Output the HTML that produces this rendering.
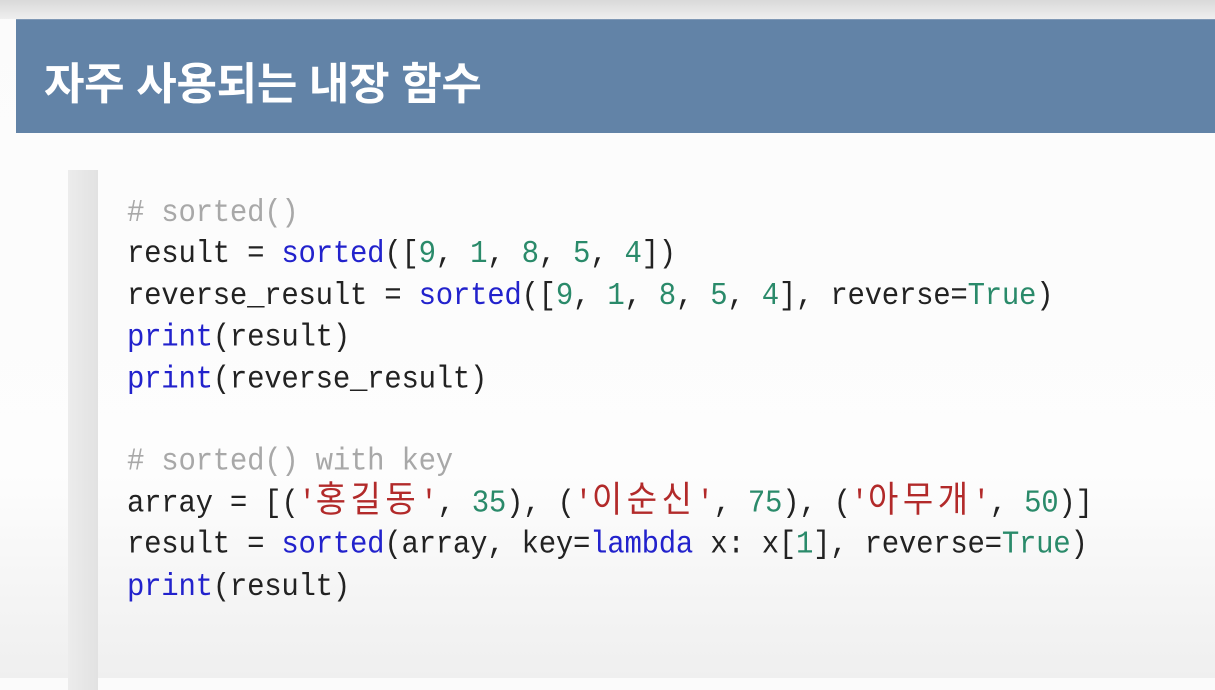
<!DOCTYPE html>
<html><head><meta charset="utf-8"><style>
html,body{margin:0;padding:0}
body{width:1215px;height:678px;overflow:hidden;position:relative;
background:linear-gradient(#fbfbfb 0%,#fdfdfd 70%,#efefef 100%);}
.top{position:absolute;left:0;top:0;width:1215px;height:19px;background:linear-gradient(#d9d9d9,#efefef);}
.hdr{position:absolute;left:16px;top:19px;width:1199px;height:113px;background:#6283a7;border-top:1px solid #7f98b5;}
.hdr span{position:absolute;left:28px;top:28px;color:#fff;font:bold 44px "Liberation Sans","Noto Sans CJK KR",sans-serif;letter-spacing:-0.3px}
.bar{position:absolute;left:68px;top:170px;width:30px;height:520px;background:linear-gradient(90deg,#ececec,#e2e2e2);}
.code{position:absolute;left:127px;top:193px;font:29px "Liberation Mono","Noto Sans CJK KR",monospace;letter-spacing:-0.25px;color:#222;line-height:38.4px;white-space:pre;transform:scaleY(1.08);transform-origin:0 0}
.c{color:#a8a8a8}.f{color:#2222cc}.n{color:#2a8a6a}.s{color:#b22a2a}.k{letter-spacing:4.5px;font-size:33px;line-height:10px}
</style></head><body>
<div class="top"></div>
<div class="hdr"><span>자주 사용되는 내장 함수</span></div>
<div class="bar"></div>
<div class="code"><span class="c"># sorted()</span>
result = <span class="f">sorted</span>([<span class="n">9</span>, <span class="n">1</span>, <span class="n">8</span>, <span class="n">5</span>, <span class="n">4</span>])
reverse_result = <span class="f">sorted</span>([<span class="n">9</span>, <span class="n">1</span>, <span class="n">8</span>, <span class="n">5</span>, <span class="n">4</span>], reverse=<span class="n">True</span>)
<span class="f">print</span>(result)
<span class="f">print</span>(reverse_result)

<span class="c"># sorted() with key</span>
array = [(<span class="s">'<span class="k">홍길동</span>'</span>, <span class="n">35</span>), (<span class="s">'<span class="k">이순신</span>'</span>, <span class="n">75</span>), (<span class="s">'<span class="k">아무개</span>'</span>, <span class="n">50</span>)]
result = <span class="f">sorted</span>(array, key=<span class="f">lambda</span> x: x[<span class="n">1</span>], reverse=<span class="n">True</span>)
<span class="f">print</span>(result)</div>
</body></html>
